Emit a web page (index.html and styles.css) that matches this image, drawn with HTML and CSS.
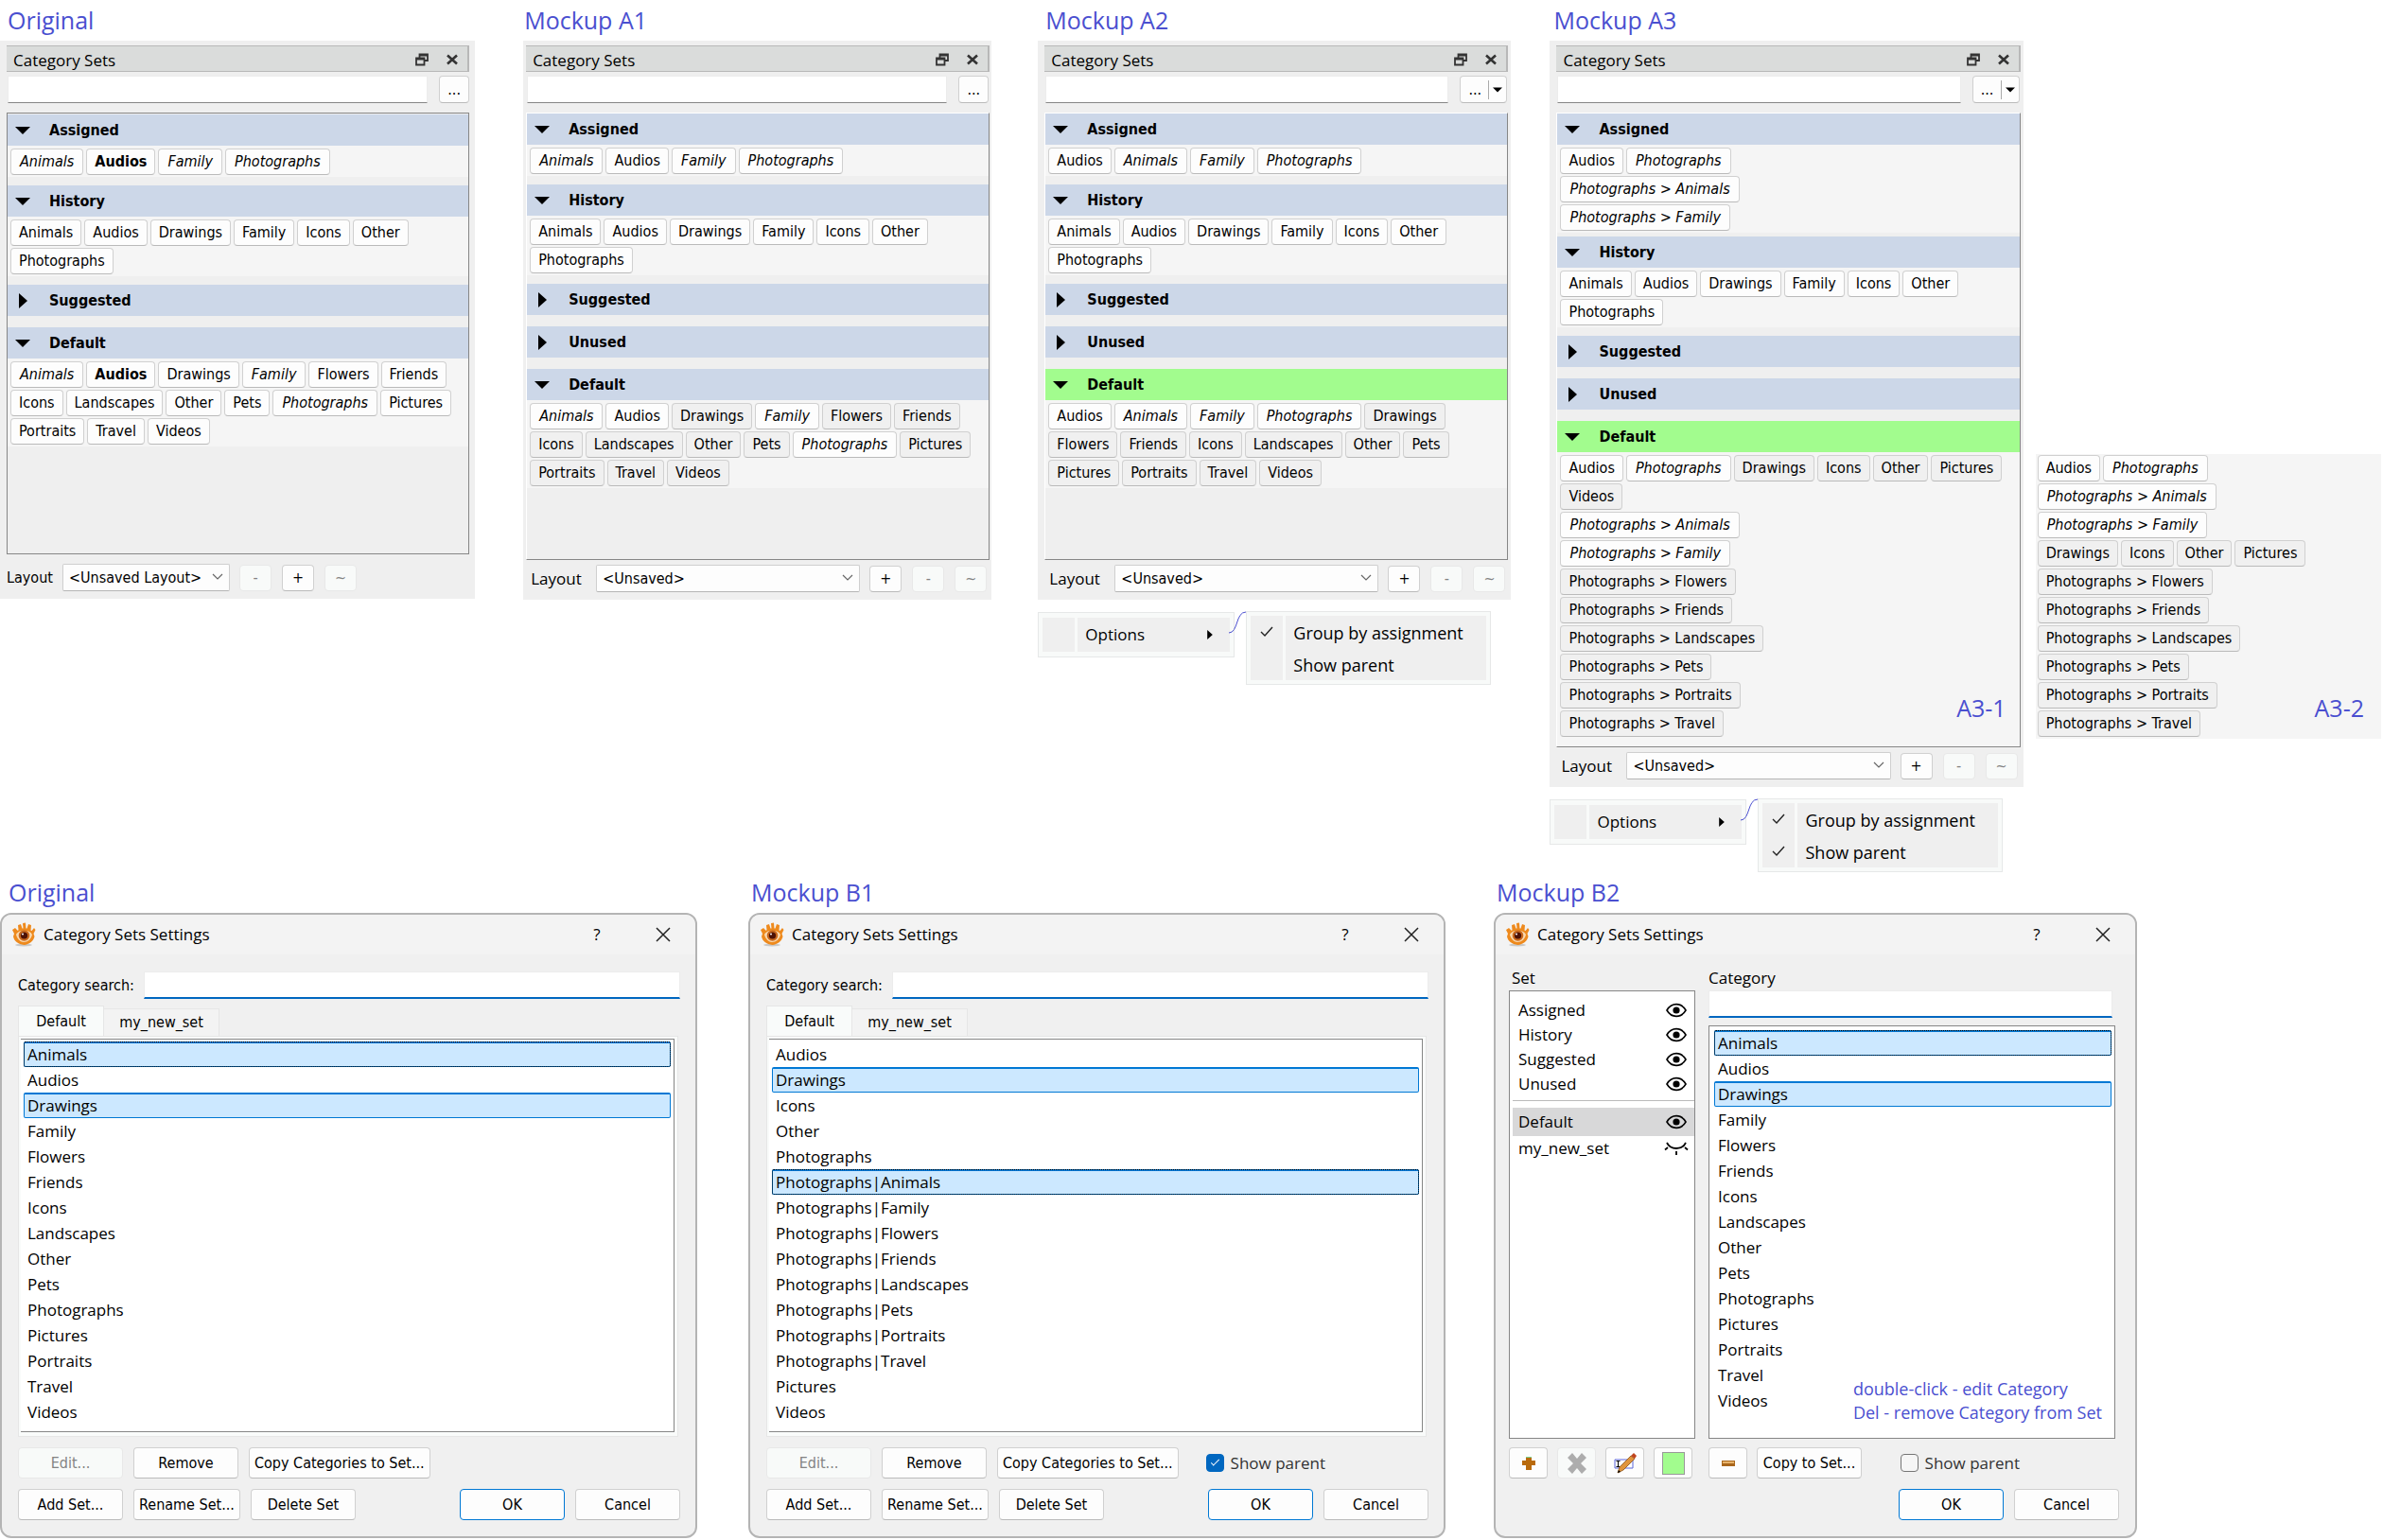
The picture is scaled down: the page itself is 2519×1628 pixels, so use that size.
FILE: index.html
```html
<!DOCTYPE html>
<html lang="en">

<head>
    <meta charset="UTF-8">
    <meta name="viewport" content="width=device-width, initial-scale=1.0">
    <title>Category Sets mockups</title>
    <link rel="stylesheet" href="styles.css">
</head>

<body>
    <!-- shared icons -->
    <svg class="sprite" aria-hidden="true">
        <symbol id="i-float" viewBox="0 0 14 14">
            <path d="M4.5 5V1.5h8.5v6.5H9.5M4.5 2.5H13M1 5.500h8.500v7H1zM1 6.500h8.500" fill="none" stroke="#333" stroke-width="1.800" />
        </symbol>
        <symbol id="i-x" viewBox="0 0 14 14">
            <path d="M2 2.500l10 9M12 2.500l-10 9" fill="none" stroke="#333" stroke-width="2.600" />
        </symbol>
        <symbol id="i-down" viewBox="0 0 16 8">
            <path d="M0 0h16L8 8z" />
        </symbol>
        <symbol id="i-right" viewBox="0 0 9 16">
            <path d="M0 0l9 8-9 8z" />
        </symbol>
        <symbol id="i-chevron" viewBox="0 0 12 8">
            <path d="M1 1l5 5 5-5" fill="none" stroke="#666" stroke-width="1.200" />
        </symbol>
        <symbol id="i-check" viewBox="0 0 14 12">
            <path d="M1 6l4 4 8-9" fill="none" stroke="#222" stroke-width="1.400" />
        </symbol>
        <symbol id="i-close" viewBox="0 0 16 16">
            <path d="M1 1l14 14M15 1L1 15" fill="none" stroke="#222" stroke-width="1.500" />
        </symbol>
        <symbol id="i-app" viewBox="0 0 26 26">
            <ellipse cx="13" cy="24" rx="9" ry="1.500" fill="#c9c9c9" />
            <path d="M1 8l3-2 3 3 .5-1-.5-5 3-1 1.500 4.500h1L12 1l3-.500.500 6h1L18 2l3 1-.500 5.500 1 .500 2.500-3 1.500 2-2 4 1 3c-1 5-6 8.500-11 9C7 23 3 20 2 15l1-3z" fill="#ee8a1d" />
            <path d="M5 13c2-5 14-6 17 0-1 5-5 8-9 8s-7-4-8-8z" fill="#f9d9b0" />
            <circle cx="13.500" cy="14" r="5.800" fill="#c9681d" />
            <circle cx="13.500" cy="14" r="3.600" fill="#4d1206" />
            <circle cx="12" cy="12.500" r="1" fill="#fff" />
        </symbol>
        <symbol id="i-eye" viewBox="0 0 22 16">
            <path d="M1 8C6-.500 16-.500 21 8 16 16.500 6 16.500 1 8z" fill="none" stroke="#000" stroke-width="1.600" />
            <circle cx="11" cy="8" r="3.600" />
        </symbol>
        <symbol id="i-eye-off" viewBox="0 0 26 16">
            <path d="M3 2c4 8 16 8 20 0M4 7L1 9.500M22 7l3 2.500M13 11v4" fill="none" stroke="#000" stroke-width="1.800" />
        </symbol>
    </svg>

    <main class="board">

        <section class="row docks">

            <article class="dock dock-original">
                <h2 class="caption">Original</h2>
                <div class="dock-body">
                    <header class="dock-title">
                        <span>Category Sets</span>
                        <button type="button" class="icon-btn" aria-label="Float"><svg><use href="#i-float" /></svg></button>
                        <button type="button" class="icon-btn" aria-label="Close"><svg><use href="#i-x" /></svg></button>
                    </header>
                    <div class="dock-search">
                        <input type="text" class="line-input" aria-label="Search">
                        <button type="button" class="btn more">...</button>
                    </div>
                    <div class="sets">
                        <button type="button" class="set-head open"><svg><use href="#i-down" /></svg>Assigned</button>
                        <div class="chips">
                            <button type="button" class="chip part">Animals</button>
                            <button type="button" class="chip full">Audios</button>
                            <button type="button" class="chip part">Family</button>
                            <button type="button" class="chip part">Photographs</button>
                        </div>
                        <button type="button" class="set-head open"><svg><use href="#i-down" /></svg>History</button>
                        <div class="chips">
                            <button type="button" class="chip">Animals</button>
                            <button type="button" class="chip">Audios</button>
                            <button type="button" class="chip">Drawings</button>
                            <button type="button" class="chip">Family</button>
                            <button type="button" class="chip">Icons</button>
                            <button type="button" class="chip">Other</button>
                            <button type="button" class="chip">Photographs</button>
                        </div>
                        <button type="button" class="set-head closed"><svg><use href="#i-right" /></svg>Suggested</button>
                        <button type="button" class="set-head open"><svg><use href="#i-down" /></svg>Default</button>
                        <div class="chips">
                            <button type="button" class="chip part">Animals</button>
                            <button type="button" class="chip full">Audios</button>
                            <button type="button" class="chip">Drawings</button>
                            <button type="button" class="chip part">Family</button>
                            <button type="button" class="chip">Flowers</button>
                            <button type="button" class="chip">Friends</button>
                            <button type="button" class="chip">Icons</button>
                            <button type="button" class="chip">Landscapes</button>
                            <button type="button" class="chip">Other</button>
                            <button type="button" class="chip">Pets</button>
                            <button type="button" class="chip part">Photographs</button>
                            <button type="button" class="chip">Pictures</button>
                            <button type="button" class="chip">Portraits</button>
                            <button type="button" class="chip">Travel</button>
                            <button type="button" class="chip">Videos</button>
                        </div>
                    </div>
                    <div class="dock-layout">
                        <label for="layout-0">Layout</label>
                        <div class="select">
                            <select id="layout-0"><option>&lt;Unsaved Layout&gt;</option></select>
                            <svg><use href="#i-chevron" /></svg>
                        </div>
                        <button type="button" class="btn small" disabled>-</button>
                        <button type="button" class="btn small">+</button>
                        <button type="button" class="btn small" disabled>~</button>
                    </div>
                </div>
            </article>

            <article class="dock dock-a1">
                <h2 class="caption">Mockup A1</h2>
                <div class="dock-body">
                    <header class="dock-title">
                        <span>Category Sets</span>
                        <button type="button" class="icon-btn" aria-label="Float"><svg><use href="#i-float" /></svg></button>
                        <button type="button" class="icon-btn" aria-label="Close"><svg><use href="#i-x" /></svg></button>
                    </header>
                    <div class="dock-search">
                        <input type="text" class="line-input" aria-label="Search">
                        <button type="button" class="btn more">...</button>
                    </div>
                    <div class="sets">
                        <button type="button" class="set-head open"><svg><use href="#i-down" /></svg>Assigned</button>
                        <div class="chips">
                            <button type="button" class="chip part">Animals</button>
                            <button type="button" class="chip">Audios</button>
                            <button type="button" class="chip part">Family</button>
                            <button type="button" class="chip part">Photographs</button>
                        </div>
                        <button type="button" class="set-head open"><svg><use href="#i-down" /></svg>History</button>
                        <div class="chips">
                            <button type="button" class="chip">Animals</button>
                            <button type="button" class="chip">Audios</button>
                            <button type="button" class="chip">Drawings</button>
                            <button type="button" class="chip">Family</button>
                            <button type="button" class="chip">Icons</button>
                            <button type="button" class="chip">Other</button>
                            <button type="button" class="chip">Photographs</button>
                        </div>
                        <button type="button" class="set-head closed"><svg><use href="#i-right" /></svg>Suggested</button>
                        <button type="button" class="set-head closed"><svg><use href="#i-right" /></svg>Unused</button>
                        <button type="button" class="set-head open"><svg><use href="#i-down" /></svg>Default</button>
                        <div class="chips">
                            <button type="button" class="chip part">Animals</button>
                            <button type="button" class="chip">Audios</button>
                            <button type="button" class="chip off">Drawings</button>
                            <button type="button" class="chip part">Family</button>
                            <button type="button" class="chip off">Flowers</button>
                            <button type="button" class="chip off">Friends</button>
                            <button type="button" class="chip off">Icons</button>
                            <button type="button" class="chip off">Landscapes</button>
                            <button type="button" class="chip off">Other</button>
                            <button type="button" class="chip off">Pets</button>
                            <button type="button" class="chip part">Photographs</button>
                            <button type="button" class="chip off">Pictures</button>
                            <button type="button" class="chip off">Portraits</button>
                            <button type="button" class="chip off">Travel</button>
                            <button type="button" class="chip off">Videos</button>
                        </div>
                    </div>
                    <div class="dock-layout">
                        <label for="layout-1">Layout</label>
                        <div class="select">
                            <select id="layout-1"><option>&lt;Unsaved&gt;</option></select>
                            <svg><use href="#i-chevron" /></svg>
                        </div>
                        <button type="button" class="btn small">+</button>
                        <button type="button" class="btn small" disabled>-</button>
                        <button type="button" class="btn small" disabled>~</button>
                    </div>
                </div>
            </article>

            <article class="dock dock-a2">
                <h2 class="caption">Mockup A2</h2>
                <div class="dock-body">
                    <header class="dock-title">
                        <span>Category Sets</span>
                        <button type="button" class="icon-btn" aria-label="Float"><svg><use href="#i-float" /></svg></button>
                        <button type="button" class="icon-btn" aria-label="Close"><svg><use href="#i-x" /></svg></button>
                    </header>
                    <div class="dock-search">
                        <input type="text" class="line-input" aria-label="Search">
                        <button type="button" class="btn split">...<svg><use href="#i-down" /></svg></button>
                    </div>
                    <div class="sets">
                        <button type="button" class="set-head open"><svg><use href="#i-down" /></svg>Assigned</button>
                        <div class="chips">
                            <button type="button" class="chip">Audios</button>
                            <button type="button" class="chip part">Animals</button>
                            <button type="button" class="chip part">Family</button>
                            <button type="button" class="chip part">Photographs</button>
                        </div>
                        <button type="button" class="set-head open"><svg><use href="#i-down" /></svg>History</button>
                        <div class="chips">
                            <button type="button" class="chip">Animals</button>
                            <button type="button" class="chip">Audios</button>
                            <button type="button" class="chip">Drawings</button>
                            <button type="button" class="chip">Family</button>
                            <button type="button" class="chip">Icons</button>
                            <button type="button" class="chip">Other</button>
                            <button type="button" class="chip">Photographs</button>
                        </div>
                        <button type="button" class="set-head closed"><svg><use href="#i-right" /></svg>Suggested</button>
                        <button type="button" class="set-head closed"><svg><use href="#i-right" /></svg>Unused</button>
                        <button type="button" class="set-head open green"><svg><use href="#i-down" /></svg>Default</button>
                        <div class="chips">
                            <button type="button" class="chip">Audios</button>
                            <button type="button" class="chip part">Animals</button>
                            <button type="button" class="chip part">Family</button>
                            <button type="button" class="chip part">Photographs</button>
                            <button type="button" class="chip off">Drawings</button>
                            <button type="button" class="chip off">Flowers</button>
                            <button type="button" class="chip off">Friends</button>
                            <button type="button" class="chip off">Icons</button>
                            <button type="button" class="chip off">Landscapes</button>
                            <button type="button" class="chip off">Other</button>
                            <button type="button" class="chip off">Pets</button>
                            <button type="button" class="chip off">Pictures</button>
                            <button type="button" class="chip off">Portraits</button>
                            <button type="button" class="chip off">Travel</button>
                            <button type="button" class="chip off">Videos</button>
                        </div>
                    </div>
                    <div class="dock-layout">
                        <label for="layout-2">Layout</label>
                        <div class="select">
                            <select id="layout-2"><option>&lt;Unsaved&gt;</option></select>
                            <svg><use href="#i-chevron" /></svg>
                        </div>
                        <button type="button" class="btn small">+</button>
                        <button type="button" class="btn small" disabled>-</button>
                        <button type="button" class="btn small" disabled>~</button>
                    </div>
                </div>
                <div class="menus">
                    <div class="menu">
                        <button type="button" class="menu-item"><span class="tick"></span><span class="menu-text">Options</span><svg class="arrow"><use href="#i-right" /></svg></button>
                    </div>
                    <svg class="link" viewBox="0 0 18 24"><path d="M0 23c10 0 7-22 18-22" /></svg>
                    <div class="menu submenu">
                        <button type="button" class="menu-item"><span class="tick"><svg><use href="#i-check" /></svg></span><span class="menu-text">Group by assignment</span></button>
                        <button type="button" class="menu-item"><span class="tick"></span><span class="menu-text">Show parent</span></button>
                    </div>
                </div>
            </article>

            <article class="dock dock-a3">
                <h2 class="caption">Mockup A3</h2>
                <div class="dock-body">
                    <header class="dock-title">
                        <span>Category Sets</span>
                        <button type="button" class="icon-btn" aria-label="Float"><svg><use href="#i-float" /></svg></button>
                        <button type="button" class="icon-btn" aria-label="Close"><svg><use href="#i-x" /></svg></button>
                    </header>
                    <div class="dock-search">
                        <input type="text" class="line-input" aria-label="Search">
                        <button type="button" class="btn split">...<svg><use href="#i-down" /></svg></button>
                    </div>
                    <div class="sets">
                        <button type="button" class="set-head open"><svg><use href="#i-down" /></svg>Assigned</button>
                        <div class="chips tight">
                            <button type="button" class="chip">Audios</button>
                            <button type="button" class="chip part">Photographs</button>
                            <div class="line"><button type="button" class="chip part">Photographs &gt; Animals</button></div>
                            <div class="line"><button type="button" class="chip part">Photographs &gt; Family</button></div>
                        </div>
                        <button type="button" class="set-head open"><svg><use href="#i-down" /></svg>History</button>
                        <div class="chips">
                            <button type="button" class="chip">Animals</button>
                            <button type="button" class="chip">Audios</button>
                            <button type="button" class="chip">Drawings</button>
                            <button type="button" class="chip">Family</button>
                            <button type="button" class="chip">Icons</button>
                            <button type="button" class="chip">Other</button>
                            <button type="button" class="chip">Photographs</button>
                        </div>
                        <button type="button" class="set-head closed"><svg><use href="#i-right" /></svg>Suggested</button>
                        <button type="button" class="set-head closed"><svg><use href="#i-right" /></svg>Unused</button>
                        <button type="button" class="set-head open green"><svg><use href="#i-down" /></svg>Default</button>
                        <div class="chips fill">
                            <button type="button" class="chip">Audios</button>
                            <button type="button" class="chip part">Photographs</button>
                            <button type="button" class="chip off">Drawings</button>
                            <button type="button" class="chip off">Icons</button>
                            <button type="button" class="chip off">Other</button>
                            <button type="button" class="chip off">Pictures</button>
                            <button type="button" class="chip off">Videos</button>
                            <div class="line"><button type="button" class="chip part">Photographs &gt; Animals</button></div>
                            <div class="line"><button type="button" class="chip part">Photographs &gt; Family</button></div>
                            <div class="line"><button type="button" class="chip off">Photographs &gt; Flowers</button></div>
                            <div class="line"><button type="button" class="chip off">Photographs &gt; Friends</button></div>
                            <div class="line"><button type="button" class="chip off">Photographs &gt; Landscapes</button></div>
                            <div class="line"><button type="button" class="chip off">Photographs &gt; Pets</button></div>
                            <div class="line"><button type="button" class="chip off">Photographs &gt; Portraits</button></div>
                            <div class="line"><button type="button" class="chip off">Photographs &gt; Travel</button></div>
                            <span class="variant">A3-1</span>
                        </div>
                    </div>
                    <div class="dock-layout">
                        <label for="layout-3">Layout</label>
                        <div class="select">
                            <select id="layout-3"><option>&lt;Unsaved&gt;</option></select>
                            <svg><use href="#i-chevron" /></svg>
                        </div>
                        <button type="button" class="btn small">+</button>
                        <button type="button" class="btn small" disabled>-</button>
                        <button type="button" class="btn small" disabled>~</button>
                    </div>
                </div>
                <div class="menus">
                    <div class="menu">
                        <button type="button" class="menu-item"><span class="tick"></span><span class="menu-text">Options</span><svg class="arrow"><use href="#i-right" /></svg></button>
                    </div>
                    <svg class="link" viewBox="0 0 18 24"><path d="M0 23c10 0 7-22 18-22" /></svg>
                    <div class="menu submenu">
                        <button type="button" class="menu-item"><span class="tick"><svg><use href="#i-check" /></svg></span><span class="menu-text">Group by assignment</span></button>
                        <button type="button" class="menu-item"><span class="tick"><svg><use href="#i-check" /></svg></span><span class="menu-text">Show parent</span></button>
                    </div>
                </div>
            </article>

            <aside class="alt">
                <div class="chips">
                    <button type="button" class="chip">Audios</button>
                    <button type="button" class="chip part">Photographs</button>
                    <div class="line"><button type="button" class="chip part">Photographs &gt; Animals</button></div>
                    <div class="line"><button type="button" class="chip part">Photographs &gt; Family</button></div>
                    <button type="button" class="chip off">Drawings</button>
                    <button type="button" class="chip off">Icons</button>
                    <button type="button" class="chip off">Other</button>
                    <button type="button" class="chip off">Pictures</button>
                    <div class="line"><button type="button" class="chip off">Photographs &gt; Flowers</button></div>
                    <div class="line"><button type="button" class="chip off">Photographs &gt; Friends</button></div>
                    <div class="line"><button type="button" class="chip off">Photographs &gt; Landscapes</button></div>
                    <div class="line"><button type="button" class="chip off">Photographs &gt; Pets</button></div>
                    <div class="line"><button type="button" class="chip off">Photographs &gt; Portraits</button></div>
                    <div class="line"><button type="button" class="chip off">Photographs &gt; Travel</button></div>
                    <span class="variant">A3-2</span>
                </div>
            </aside>

        </section>

        <section class="row dialogs">

            <article class="dlg dlg-original">
                <h2 class="caption">Original</h2>
                <div class="dlg-window">
                    <header class="dlg-title">
                        <svg class="app"><use href="#i-app" /></svg>
                        <span>Category Sets Settings</span>
                        <button type="button" class="icon-btn help">?</button>
                        <button type="button" class="icon-btn" aria-label="Close"><svg><use href="#i-close" /></svg></button>
                    </header>
                    <div class="dlg-body">
                        <div class="search">
                            <label for="search-0">Category search:</label>
                            <input type="text" id="search-0" class="line-input focus">
                        </div>
                        <div class="tabs">
                            <button type="button" class="tab active">Default</button>
                            <button type="button" class="tab">my_new_set</button>
                        </div>
                        <div class="pane">
                            <ul class="list">
                                <li class="selected current">Animals</li>
                                <li>Audios</li>
                                <li class="selected">Drawings</li>
                                <li>Family</li>
                                <li>Flowers</li>
                                <li>Friends</li>
                                <li>Icons</li>
                                <li>Landscapes</li>
                                <li>Other</li>
                                <li>Pets</li>
                                <li>Photographs</li>
                                <li>Pictures</li>
                                <li>Portraits</li>
                                <li>Travel</li>
                                <li>Videos</li>
                            </ul>
                        </div>
                        <div class="actions">
                            <button type="button" class="btn" disabled>Edit...</button>
                            <button type="button" class="btn">Remove</button>
                            <button type="button" class="btn">Copy Categories to Set...</button>
                        </div>
                        <div class="actions">
                            <button type="button" class="btn">Add Set...</button>
                            <button type="button" class="btn">Rename Set...</button>
                            <button type="button" class="btn">Delete Set</button>
                            <button type="button" class="btn ok">OK</button>
                            <button type="button" class="btn">Cancel</button>
                        </div>
                    </div>
                </div>
            </article>

            <article class="dlg dlg-b1">
                <h2 class="caption">Mockup B1</h2>
                <div class="dlg-window">
                    <header class="dlg-title">
                        <svg class="app"><use href="#i-app" /></svg>
                        <span>Category Sets Settings</span>
                        <button type="button" class="icon-btn help">?</button>
                        <button type="button" class="icon-btn" aria-label="Close"><svg><use href="#i-close" /></svg></button>
                    </header>
                    <div class="dlg-body">
                        <div class="search">
                            <label for="search-1">Category search:</label>
                            <input type="text" id="search-1" class="line-input focus">
                        </div>
                        <div class="tabs">
                            <button type="button" class="tab active">Default</button>
                            <button type="button" class="tab">my_new_set</button>
                        </div>
                        <div class="pane">
                            <ul class="list">
                                <li>Audios</li>
                                <li class="selected">Drawings</li>
                                <li>Icons</li>
                                <li>Other</li>
                                <li>Photographs</li>
                                <li class="selected current">Photographs|Animals</li>
                                <li>Photographs|Family</li>
                                <li>Photographs|Flowers</li>
                                <li>Photographs|Friends</li>
                                <li>Photographs|Landscapes</li>
                                <li>Photographs|Pets</li>
                                <li>Photographs|Portraits</li>
                                <li>Photographs|Travel</li>
                                <li>Pictures</li>
                                <li>Videos</li>
                            </ul>
                        </div>
                        <div class="actions">
                            <button type="button" class="btn" disabled>Edit...</button>
                            <button type="button" class="btn">Remove</button>
                            <button type="button" class="btn">Copy Categories to Set...</button>
                            <label class="check"><input type="checkbox" checked>Show parent</label>
                        </div>
                        <div class="actions">
                            <button type="button" class="btn">Add Set...</button>
                            <button type="button" class="btn">Rename Set...</button>
                            <button type="button" class="btn">Delete Set</button>
                            <button type="button" class="btn ok">OK</button>
                            <button type="button" class="btn">Cancel</button>
                        </div>
                    </div>
                </div>
            </article>

            <article class="dlg dlg-b2">
                <h2 class="caption">Mockup B2</h2>
                <div class="dlg-window">
                    <header class="dlg-title">
                        <svg class="app"><use href="#i-app" /></svg>
                        <span>Category Sets Settings</span>
                        <button type="button" class="icon-btn help">?</button>
                        <button type="button" class="icon-btn" aria-label="Close"><svg><use href="#i-close" /></svg></button>
                    </header>
                    <div class="dlg-body columns">
                        <div class="col-set">
                            <h3 class="col-title">Set</h3>
                            <ul class="set-list">
                                <li>Assigned<button type="button" class="icon-btn" aria-label="Hide"><svg><use href="#i-eye" /></svg></button></li>
                                <li>History<button type="button" class="icon-btn" aria-label="Hide"><svg><use href="#i-eye" /></svg></button></li>
                                <li>Suggested<button type="button" class="icon-btn" aria-label="Hide"><svg><use href="#i-eye" /></svg></button></li>
                                <li>Unused<button type="button" class="icon-btn" aria-label="Hide"><svg><use href="#i-eye" /></svg></button></li>
                                <li class="active">Default<button type="button" class="icon-btn" aria-label="Hide"><svg><use href="#i-eye" /></svg></button></li>
                                <li>my_new_set<button type="button" class="icon-btn" aria-label="Show"><svg class="wide"><use href="#i-eye-off" /></svg></button></li>
                            </ul>
                            <div class="tools">
                                <button type="button" class="btn tool" aria-label="Add set">
                                    <svg viewBox="0 0 16 16"><path d="M5 1h6v4h4v5h-4v5H5v-5H1V5h4z" fill="#b96a0c" /><path d="M5 1h6v1H5z" fill="#7fd08a" /></svg>
                                </button>
                                <button type="button" class="btn tool" aria-label="Delete set" disabled>
                                    <svg class="big" viewBox="0 0 24 24"><path d="M2 6l5-5 5 6 5-6 5 5-6 6 6 6-5 5-5-6-5 6-5-5 6-6z" fill="#adadad" /></svg>
                                </button>
                                <button type="button" class="btn tool" aria-label="Rename set">
                                    <svg class="big" viewBox="0 0 24 24"><path d="M1 8h19v9H1z" fill="#fff" stroke="#5a64d8" /><path d="M2.500 9.500h4M2.500 15.500h4M4.500 9.500v6" stroke="#000" fill="none" /><path d="M4 22l2-6L18 4l4 3L10 19z" fill="#e0953c" stroke="#8a5217" stroke-width=".800" /><path d="M18 4l3-3 3 3-2 3z" fill="#c0451f" /><path d="M4 22l1-3 2 2z" /></svg>
                                </button>
                                <button type="button" class="btn tool" aria-label="Set color"><span class="swatch"></span></button>
                            </div>
                        </div>
                        <div class="col-cat">
                            <label class="col-title" for="search-2">Category</label>
                            <input type="text" id="search-2" class="line-input focus">
                            <ul class="list">
                                <li class="selected current">Animals</li>
                                <li>Audios</li>
                                <li class="selected">Drawings</li>
                                <li>Family</li>
                                <li>Flowers</li>
                                <li>Friends</li>
                                <li>Icons</li>
                                <li>Landscapes</li>
                                <li>Other</li>
                                <li>Pets</li>
                                <li>Photographs</li>
                                <li>Pictures</li>
                                <li>Portraits</li>
                                <li>Travel</li>
                                <li>Videos</li>
                                <li class="note">double-click - edit Category<br>Del - remove Category from Set</li>
                            </ul>
                            <div class="tools">
                                <button type="button" class="btn tool" aria-label="Remove category">
                                    <svg viewBox="0 0 16 16"><path d="M1 5h14v6H1z" fill="#a9661b" /><path d="M2 6h12v2H2z" fill="#e8b36b" /></svg>
                                </button>
                                <button type="button" class="btn copy">Copy to Set...</button>
                                <label class="check"><input type="checkbox">Show parent</label>
                            </div>
                            <div class="actions end">
                                <button type="button" class="btn ok">OK</button>
                                <button type="button" class="btn">Cancel</button>
                            </div>
                        </div>
                    </div>
                </div>
            </article>

        </section>

    </main>
</body>

</html>
```

FILE: styles.css
```css
*,
*::before,
*::after {
    box-sizing: border-box;
}

body {
    margin: 0;
    background: #fff;
    color: #000;
    font-family: "Open Sans", sans-serif;
    font-size: 17px;
    line-height: 24px;
}

button,
input,
select {
    margin: 0;
    padding: 0;
    color: inherit;
    font-family: "DejaVu Sans Condensed", "DejaVu Sans", sans-serif;
    font-size: 16px;
    line-height: 20px;
}

ul {
    margin: 0;
    padding: 0;
    list-style: none;
}

.sprite {
    position: absolute;
    width: 0;
    height: 0;
}

.row {
    display: flex;
    align-items: flex-start;
}

.caption {
    margin: 0;
    padding-left: 8px;
    font-size: 25px;
    font-weight: 400;
    line-height: 43px;
    color: #4a4fd0;
}

/* shared controls */
.btn {
    min-width: 111px;
    height: 33px;
    padding: 0 5px;
    background: #fdfdfd;
    border: 1px solid #d0d0d0;
    border-bottom-color: #bababa;
    border-radius: 4px;
}

.btn:disabled {
    background: #f8faf9;
    border-color: #e8e8e8;
    color: #838383;
}

.icon-btn {
    display: flex;
    align-items: center;
    justify-content: center;
    background: none;
    border: none;
}

.line-input {
    flex: 1;
    min-width: 0;
    height: 29px;
    background: #fff;
    border: 1px solid #ececec;
    border-bottom: 1px solid #868686;
}

.line-input.focus {
    border-bottom: 2px solid #0067c0;
}

/* dock panels */
.dock {
    flex: 501 1 0;
    min-width: 0;
}

.dock-original {
    flex-grow: 503;
}

.dock-a1 {
    flex-grow: 496;
    margin-left: 51px;
}

.dock-a2 {
    margin-left: 49px;
}

.dock-a3 {
    margin-left: 41px;
}

.dock-a1 .caption {
    padding-left: 1px;
}

.dock-a3 .caption {
    padding-left: 4px;
}

.dock-body {
    padding: 5px 3px 8px 7px;
    background: #efefef;
}

.dock-original .dock-body {
    padding-right: 6px;
}

.dock-a1 .dock-body {
    padding: 5px 2px 8px 3px;
}

.dock-title {
    display: flex;
    align-items: center;
    height: 28px;
    padding: 0 9px 0 7px;
    background: #dadcdb;
    border: 1px solid #b8b8b8;
    border-left: none;
    border-right-width: 2px;
}

.dock-title span {
    flex: 1;
    padding-top: 4px;
}

.dock-title .icon-btn {
    padding-top: 2px;
}

.dock-title svg {
    width: 14px;
    height: 14px;
}

.dock-title .icon-btn:last-child {
    margin-left: 18px;
}

.dock-search {
    display: flex;
    gap: 12px;
    margin: 4px 1px 10px;
}

.dock-search .btn {
    height: 29px;
}

.dock-original .dock-search {
    margin-right: 0;
}

.btn.more {
    min-width: 32px;
}

.btn.split {
    display: flex;
    align-items: center;
    justify-content: space-between;
    min-width: 50px;
    padding: 0 4px 0 8px;
}

.split svg {
    width: 15px;
    height: 20px;
    padding: 7px 0 7px 4px;
    border-left: 1px solid #aaa;
}

.sets {
    display: flex;
    flex-direction: column;
    min-height: 473px;
    border-top: 1px solid #fff;
    border-left: 1px solid #fff;
    border-right: 1px solid #868686;
    border-bottom: 1px solid #868686;
}

.dock-original .sets {
    min-height: 467px;
    padding-top: 1px;
    border-color: #868686;
}

.dock-a3 .sets {
    min-height: 671px;
}

.set-head {
    display: flex;
    align-items: center;
    height: 33px;
    padding-left: 8px;
    background: #ccd7e8;
    border: none;
    font-weight: 700;
    text-align: left;
}

.set-head.closed {
    margin-bottom: 12px;
    padding-left: 12px;
}

.set-head svg {
    width: 16px;
    height: 8px;
    margin-right: 20px;
}

.set-head.closed svg {
    width: 9px;
    height: 16px;
    margin-right: 23px;
}

.set-head.green {
    background: #a2fc8e;
}

.chips {
    position: relative;
    display: flex;
    flex-wrap: wrap;
    align-content: flex-start;
    gap: 2px 3px;
    margin-bottom: 9px;
    padding: 3px 2px 2px 3px;
    background: #f5f5f5;
}

.chips.tight {
    margin-bottom: 4px;
}

.chips.fill {
    flex: 1;
    margin-bottom: 0;
}

.chip {
    height: 28px;
    padding: 0 8px;
    background: #fdfdfd;
    border: 1px solid #d0d0d0;
    border-bottom-color: #bababa;
    border-radius: 4px;
    white-space: nowrap;
}

.chip.part {
    padding: 0 9px;
    font-style: italic;
}

.chip.full {
    font-weight: 700;
}

.chip.off {
    background: #f0f0f0;
}

.line {
    display: flex;
    width: 100%;
}

.variant {
    position: absolute;
    right: 18px;
    bottom: 16px;
    font-size: 25px;
    line-height: 34px;
    color: #4a4fd0;
}

.chips.fill .variant {
    right: 14px;
    bottom: 24px;
}

.alt {
    flex: 366 1 0;
    min-width: 0;
    margin: 480px 2px 0 13px;
}

.alt .chips {
    margin: 0;
    padding: 1px 2px 2px;
}

.dock-layout {
    display: flex;
    align-items: center;
    gap: 10px;
    margin-top: 5px;
    padding-right: 3px;
}

.dock-layout label {
    width: 64px;
    padding-left: 5px;
}

.dock-original .dock-layout {
    margin-top: 10px;
}

.dock-original .dock-layout label {
    width: 49px;
    padding: 0;
    font-family: "DejaVu Sans Condensed", "DejaVu Sans", sans-serif;
    font-size: 16px;
}

.select {
    position: relative;
    flex: 1;
    height: 29px;
}

.dock-original .select {
    flex: 0 0 177px;
}

.select select {
    width: 100%;
    height: 100%;
    padding-left: 6px;
    background: #fdfdfd;
    border: 1px solid #cfcfcf;
    border-bottom-color: #b5b5b5;
    border-radius: 2px;
    appearance: none;
}

.select svg {
    position: absolute;
    top: 10px;
    right: 7px;
    width: 12px;
    height: 8px;
    pointer-events: none;
}

.btn.small {
    min-width: 34px;
    height: 28px;
}

.small + .small {
    margin-left: 1px;
}

/* context menus */
.menus {
    display: flex;
    align-items: flex-start;
    margin-top: 12px;
}

.menu {
    width: 208px;
    margin-top: 1px;
    padding: 5px 4px;
    background: #f8faf9;
    border: 1px solid #e6e8e8;
}

.submenu {
    width: 259px;
    margin-top: 0;
    padding: 4px;
    font-size: 18px;
}

.link {
    width: 18px;
    height: 24px;
    margin: 0 0 0 -6px;
    fill: none;
    stroke: #4a4fd0;
}

.menu-item {
    display: flex;
    align-items: center;
    gap: 3px;
    width: 100%;
    height: 36px;
    padding: 0;
    background: none;
    border: none;
    font: inherit;
    text-align: left;
}

.submenu .menu-item {
    height: 34px;
}

.tick {
    display: flex;
    align-items: center;
    justify-content: center;
    width: 34px;
    height: 100%;
    background: #efefef;
}

.tick svg {
    width: 14px;
    height: 12px;
}

.menu-text {
    flex: 1;
    height: 100%;
    padding-left: 8px;
    background: #efefef;
    line-height: 36px;
}

.arrow {
    width: 6px;
    height: 10px;
    margin: 0 18px 0 -27px;
}

/* settings dialogs */
.dialogs {
    padding-right: 260px;
}

.dlg {
    flex: 737 1 0;
    min-width: 0;
}

.dlg-b1 {
    margin-left: 54px;
}

.dlg-b2 {
    flex-grow: 680;
    margin-left: 51px;
}

.dlg .caption {
    padding-left: 3px;
}

.dlg-original .caption {
    padding-left: 9px;
}

.dlg-window {
    background: #f0f0f0;
    border: 2px solid #b4b4b4;
    border-radius: 12px;
    overflow: hidden;
}

.dlg-title {
    display: flex;
    align-items: center;
    height: 42px;
    padding: 0 18px 0 10px;
    background: #f3f3f3;
}

.dlg-title span {
    flex: 1;
}

.dlg-title .icon-btn {
    width: 32px;
}

.dlg-title .help {
    width: 60px;
    margin-right: 24px;
    font: inherit;
}

.dlg-title .icon-btn svg {
    width: 16px;
    height: 16px;
}

.app {
    width: 26px;
    height: 26px;
    margin-right: 8px;
}

.dlg-body {
    padding: 18px 16px 17px 17px;
}

.search {
    display: flex;
    align-items: center;
    gap: 10px;
}

.search label {
    font-family: "DejaVu Sans Condensed", "DejaVu Sans", sans-serif;
    font-size: 16px;
}

.tabs {
    display: flex;
    align-items: flex-end;
    margin-top: 7px;
}

.tab {
    min-width: 122px;
    height: 29px;
    padding: 0 14px;
    background: #f3f3f3;
    border: 1px solid #e6e6e6;
    border-bottom: none;
    border-left: none;
}

.tab.active {
    min-width: 91px;
    height: 32px;
    background: #f9fbfa;
    border-left: 1px solid #e6e6e6;
}

.pane {
    margin: 0 2px 11px 0;
    padding: 2px 3px 4px 2px;
    background: #f9fbfa;
    border: 1px solid #e6e6e6;
}

.list {
    position: relative;
    min-height: 416px;
    padding: 2px 3px 6px;
    background: #fff;
    border-top: 1px solid #868686;
    border-right: 1px solid #868686;
    border-bottom: 1px solid #868686;
}

.list li {
    height: 27px;
    padding-left: 3px;
    border: 1px solid transparent;
    line-height: 25px;
}

.list .selected {
    background: #cce8ff;
    border: 1px solid #0078d4;
    border-top-width: 2px;
    border-radius: 2px;
    line-height: 24px;
}

.list .current {
    outline: 1px dotted #000;
    outline-offset: -1px;
}

.actions {
    display: flex;
    gap: 11px;
    margin-top: 11px;
}

.actions .ok {
    margin-left: auto;
}

.btn.ok {
    border: 1px solid #0078d4;
}

.check {
    display: flex;
    align-items: center;
    gap: 7px;
    margin-left: auto;
    color: #333;
}

.actions .check {
    margin-right: 109px;
}

.check input {
    width: 19px;
    height: 19px;
    background: #f6f6f6;
    border: 1px solid #767676;
    border-radius: 4px;
    appearance: none;
}

.check input:checked {
    background: #0067c0;
    border-color: #0067c0;
}

.check input:checked::before {
    content: "";
    display: block;
    width: 9px;
    height: 4px;
    margin: 5px 4px;
    border-left: 1px solid #fff;
    border-bottom: 1px solid #fff;
    transform: rotate(-45deg);
}

/* two column dialog */
.dlg-body.columns {
    display: flex;
    align-items: flex-start;
    gap: 14px;
    padding: 12px 17px 17px 14px;
}

.col-set {
    width: 197px;
}

.col-cat {
    display: flex;
    flex: 1;
    flex-direction: column;
}

.col-title {
    margin: 0;
    padding-left: 3px;
    font-size: 17px;
    font-weight: 400;
    line-height: 26px;
}

.col-cat .col-title {
    padding: 0;
}

.col-cat .line-input {
    flex: none;
    margin: 0 7px 8px 0;
}

.col-cat .list {
    min-height: 437px;
    margin-right: 4px;
    padding: 4px 3px 0 5px;
    border: 1px solid #868686;
}

.set-list {
    min-height: 474px;
    padding-top: 7px;
    background: #fff;
    border: 1px solid #868686;
}

.set-list li {
    display: flex;
    align-items: center;
    justify-content: space-between;
    height: 26px;
    margin-left: 3px;
    padding: 0 6px;
}

.set-list .active {
    height: 30px;
    margin-top: 12px;
    background: #d8d8d9;
    box-shadow: 0 -7px #fff, 0 -8px #bbb;
}

.set-list .icon-btn {
    width: 26px;
}

.set-list svg {
    width: 22px;
    height: 16px;
}

.set-list .wide {
    width: 26px;
}

.tools {
    display: flex;
    gap: 10px;
    margin-top: 9px;
}

.btn.tool {
    display: flex;
    align-items: center;
    justify-content: center;
    min-width: 41px;
}

.tool svg {
    width: 16px;
    height: 16px;
}

.tool .big {
    width: 24px;
    height: 24px;
}

.swatch {
    width: 24px;
    height: 24px;
    background: #a2fc8e;
    border: 1px solid #999;
}

.tools .check {
    margin-right: 105px;
}

.list .note {
    position: absolute;
    right: 12px;
    bottom: 13px;
    height: auto;
    font-size: 18px;
    line-height: 25px;
    color: #4a4fd0;
}
```
